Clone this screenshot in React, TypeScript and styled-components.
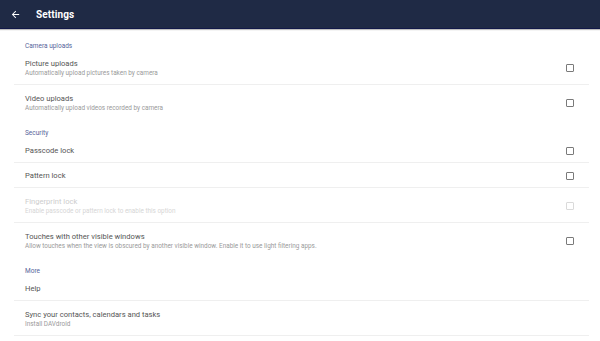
import styled, { createGlobalStyle } from "styled-components";

const GlobalStyle = createGlobalStyle`
  html, body {
    margin: 0;
    padding: 0;
    background: #ffffff;
    font-family: Roboto, "Noto Sans", Arial, sans-serif;
  }
`;

const Page = styled.div`
  width: 600px;
  height: 341px;
  overflow: hidden;
  display: flex;
  flex-direction: column;
`;

const TopBar = styled.header`
  height: 28px;
  flex: none;
  display: flex;
  align-items: center;
  background: #1f2a45;
  border-bottom: 1px solid #111848;
  box-shadow: 0 1px 1px rgba(0, 0, 0, 0.25);
  color: #ffffff;
  position: relative;
  z-index: 1;
`;

const BackButton = styled.div`
  width: 11px;
  height: 11px;
  margin-left: 10px;
  display: flex;
  align-items: center;
  justify-content: center;
`;

const Title = styled.h1`
  margin: 0 0 0 15px;
  font-size: 10px;
  font-weight: 700;
  letter-spacing: 0.1px;
`;

const List = styled.div`
  display: flex;
  flex-direction: column;
  margin: 2px 11px 0 14px;
`;

const SectionLabel = styled.div<{ $first?: boolean }>`
  height: ${(p) => (p.$first ? 19 : 18)}px;
  padding-left: 11px;
  box-sizing: border-box;
  display: flex;
  align-items: flex-end;
  padding-bottom: ${(p) => (p.$first ? 0 : 1)}px;
  font-size: 6.5px;
  line-height: 8px;
  color: #56649a;
`;

const Row = styled.div<{ $tall?: boolean; $divider?: boolean }>`
  height: ${(p) => (p.$tall ? 35 : 25)}px;
  box-sizing: border-box;
  display: flex;
  align-items: center;
  padding: 1px 15px 0 11px;
  border-bottom: ${(p) => (p.$divider ? "1px solid #efefef" : "1px solid transparent")};
`;

const Texts = styled.div`
  flex: 1;
  display: flex;
  flex-direction: column;
  gap: 1px;
`;

const ItemTitle = styled.div<{ $disabled?: boolean }>`
  font-size: 7.6px;
  line-height: 9px;
  color: ${(p) => (p.$disabled ? "#cdcdcd" : "#555555")};
`;

const ItemSub = styled.div<{ $disabled?: boolean }>`
  font-size: 6.4px;
  line-height: 8px;
  color: ${(p) => (p.$disabled ? "#d6d6d6" : "#9a9a9a")};
`;

const Checkbox = styled.div<{ $disabled?: boolean }>`
  width: 8px;
  height: 8px;
  box-sizing: border-box;
  border: 1px solid ${(p) => (p.$disabled ? "#dadada" : "#7a7a7a")};
  border-radius: 1px;
  flex: none;
`;

type Item = {
  title: string;
  sub?: string;
  check?: boolean;
  disabled?: boolean;
  divider?: boolean;
};

type Section = { label: string; items: Item[] };

const sections: Section[] = [
  {
    label: "Camera uploads",
    items: [
      {
        title: "Picture uploads",
        sub: "Automatically upload pictures taken by camera",
        check: true,
        divider: true,
      },
      {
        title: "Video uploads",
        sub: "Automatically upload videos recorded by camera",
        check: true,
      },
    ],
  },
  {
    label: "Security",
    items: [
      { title: "Passcode lock", check: true, divider: true },
      { title: "Pattern lock", check: true, divider: true },
      {
        title: "Fingerprint lock",
        sub: "Enable passcode or pattern lock to enable this option",
        check: true,
        disabled: true,
        divider: true,
      },
      {
        title: "Touches with other visible windows",
        sub: "Allow touches when the view is obscured by another visible window. Enable it to use light filtering apps.",
        check: true,
      },
    ],
  },
  {
    label: "More",
    items: [
      { title: "Help", divider: true },
      {
        title: "Sync your contacts, calendars and tasks",
        sub: "Install DAVdroid",
        divider: true,
      },
    ],
  },
];

export default function App() {
  return (
    <Page>
      <GlobalStyle />
      <TopBar>
        <BackButton>
          <svg width="11" height="11" viewBox="0 0 24 24" fill="#ffffff">
            <path d="M20 11H7.83l5.59-5.59L12 4l-8 8 8 8 1.41-1.41L7.83 13H20v-2z" />
          </svg>
        </BackButton>
        <Title>Settings</Title>
      </TopBar>
      <List>
        {sections.map((section, i) => (
          <div key={section.label}>
            <SectionLabel $first={i === 0}>{section.label}</SectionLabel>
            {section.items.map((item) => (
              <Row key={item.title} $tall={!!item.sub} $divider={item.divider}>
                <Texts>
                  <ItemTitle $disabled={item.disabled}>{item.title}</ItemTitle>
                  {item.sub && <ItemSub $disabled={item.disabled}>{item.sub}</ItemSub>}
                </Texts>
                {item.check && <Checkbox $disabled={item.disabled} />}
              </Row>
            ))}
          </div>
        ))}
      </List>
    </Page>
  );
}
